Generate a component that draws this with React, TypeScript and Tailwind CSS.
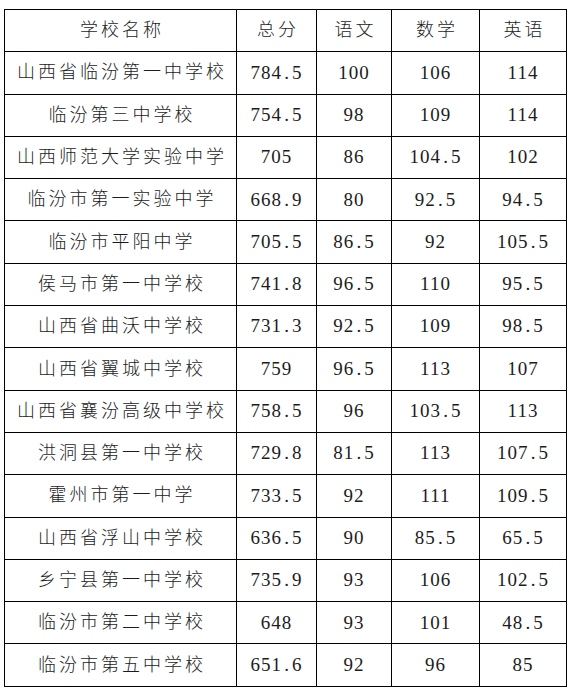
import React from "react";

const headers = ["学校名称", "总分", "语文", "数学", "英语"];

const rows: string[][] = [
  ["山西省临汾第一中学校", "784.5", "100", "106", "114"],
  ["临汾第三中学校", "754.5", "98", "109", "114"],
  ["山西师范大学实验中学", "705", "86", "104.5", "102"],
  ["临汾市第一实验中学", "668.9", "80", "92.5", "94.5"],
  ["临汾市平阳中学", "705.5", "86.5", "92", "105.5"],
  ["侯马市第一中学校", "741.8", "96.5", "110", "95.5"],
  ["山西省曲沃中学校", "731.3", "92.5", "109", "98.5"],
  ["山西省翼城中学校", "759", "96.5", "113", "107"],
  ["山西省襄汾高级中学校", "758.5", "96", "103.5", "113"],
  ["洪洞县第一中学校", "729.8", "81.5", "113", "107.5"],
  ["霍州市第一中学", "733.5", "92", "111", "109.5"],
  ["山西省浮山中学校", "636.5", "90", "85.5", "65.5"],
  ["乡宁县第一中学校", "735.9", "93", "106", "102.5"],
  ["临汾市第二中学校", "648", "93", "101", "48.5"],
  ["临汾市第五中学校", "651.6", "92", "96", "85"],
];

// 小数点在原图里占半个字宽
function Num({ v }: { v: string }) {
  const [a, b] = v.split(".");
  return (
    <span className="tracking-[1px]">
      {a}
      {b !== undefined && (
        <>
          <span className="inline-block w-[10px] text-center">.</span>
          {b}
        </>
      )}
    </span>
  );
}

function Cell({ children, zh }: { children: React.ReactNode; zh?: boolean }) {
  return (
    <div
      className={`h-[42.3px] flex items-center justify-center border-r border-b border-black ${
        zh ? "tracking-[3px] pl-[3px] text-[18px] font-light" : "text-[19px]"
      }`}
    >
      {children}
    </div>
  );
}

export default function App() {
  return (
    <div className="bg-white w-[571px] h-[692px] pt-[9px] pl-[4px] text-[#1c1c1c] font-['Liberation_Serif','Noto_Sans_CJK_SC',serif]">
      <div className="grid grid-cols-[232px_80px_75px_88px_87px] w-fit border-l border-t border-black">
        {headers.map((h) => (
          <Cell key={h} zh>
            {h}
          </Cell>
        ))}
        {rows.map((r) => (
          <React.Fragment key={r[0]}>
            <Cell zh>{r[0]}</Cell>
            {r.slice(1).map((v, i) => (
              <Cell key={i}>
                <Num v={v} />
              </Cell>
            ))}
          </React.Fragment>
        ))}
      </div>
    </div>
  );
}
